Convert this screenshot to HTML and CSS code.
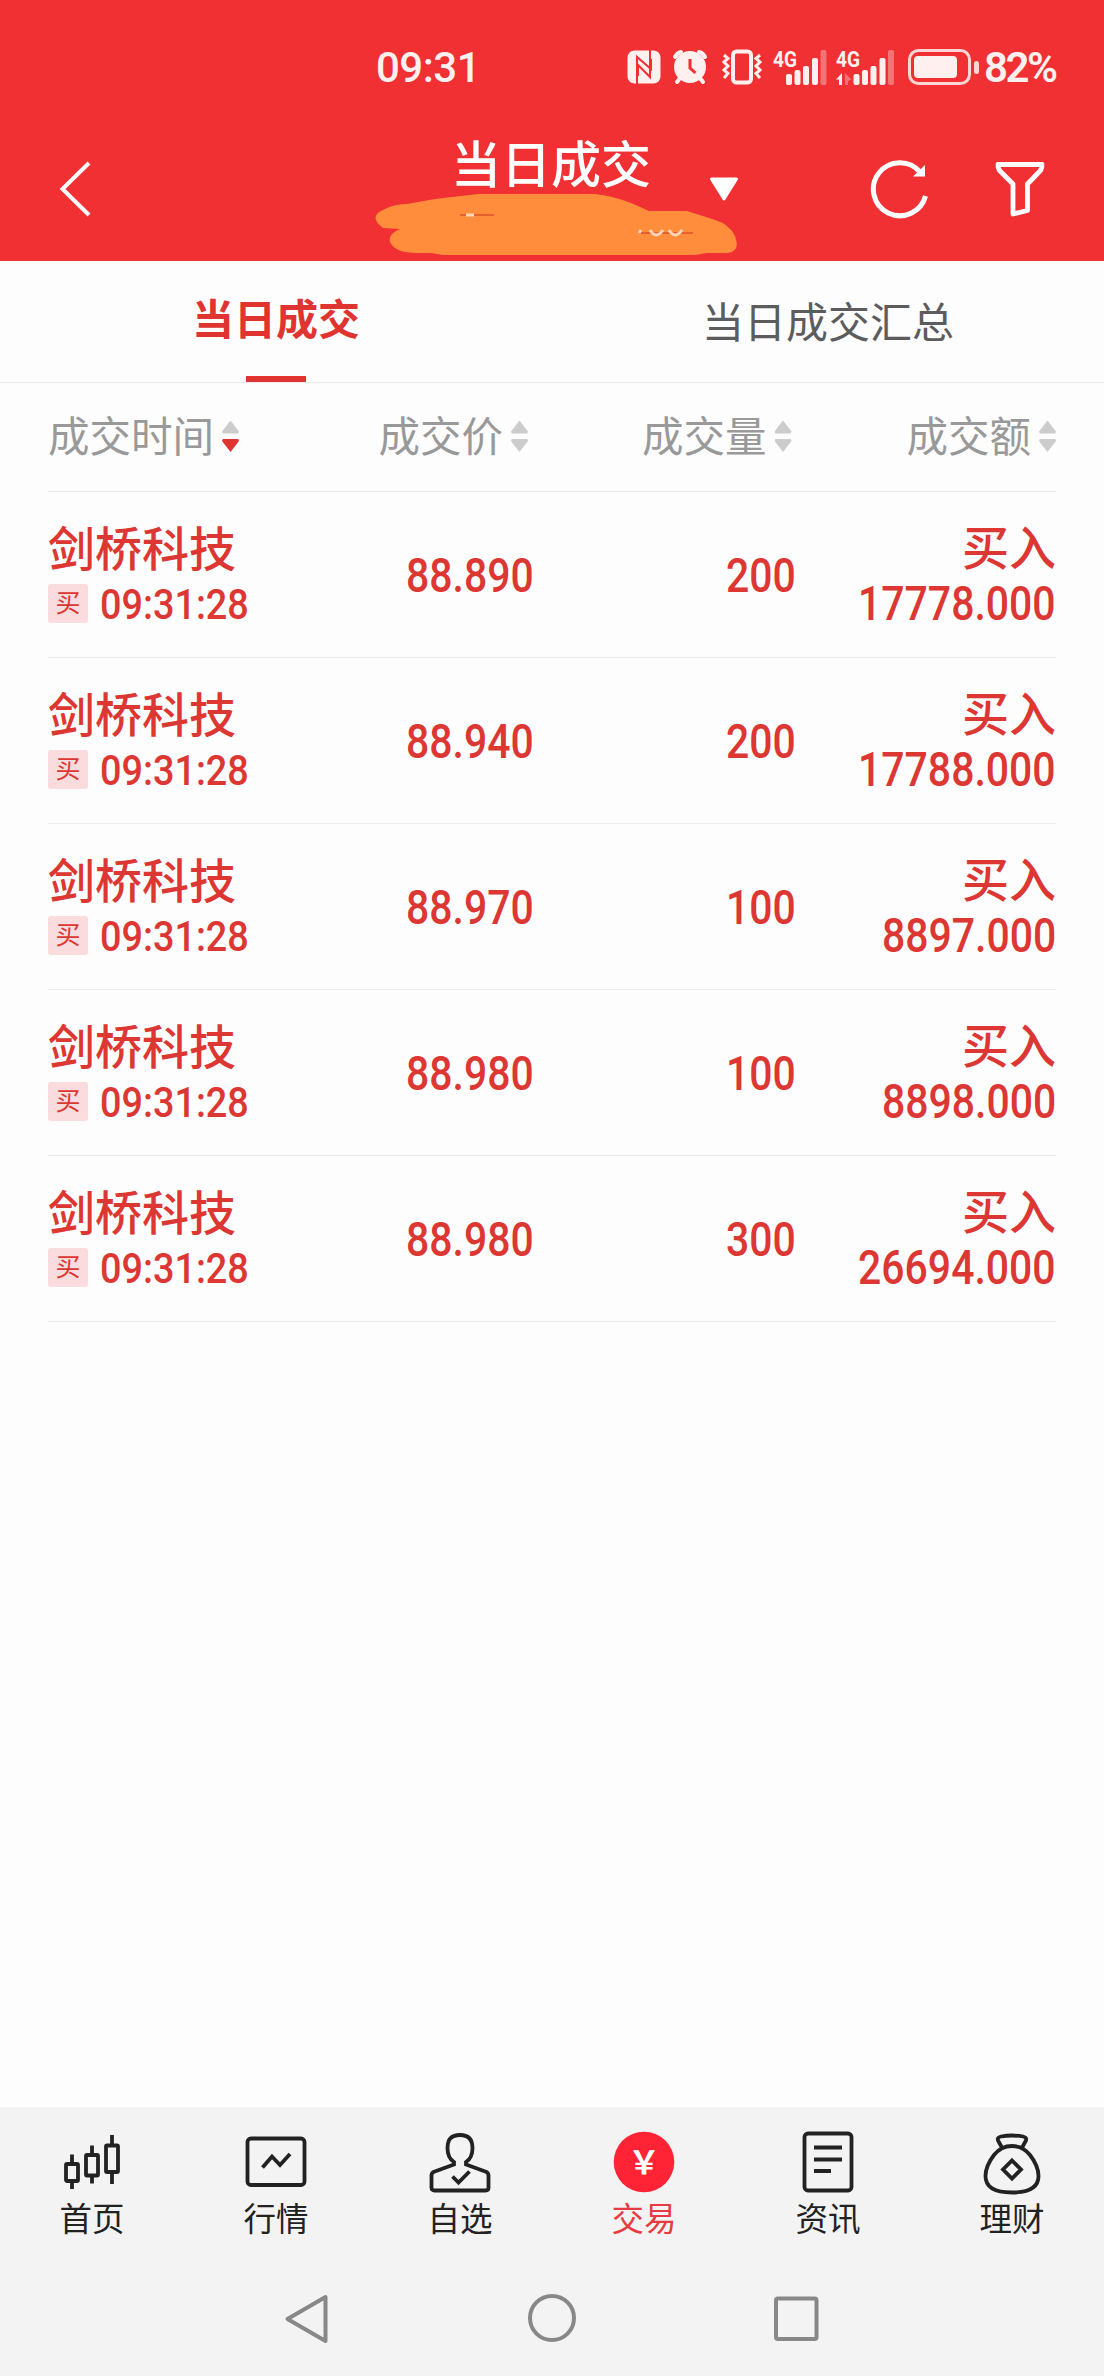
FILE: index.html
```html
<!DOCTYPE html>
<html lang="zh-CN">

<head>
    <meta charset="UTF-8">
    <meta name="viewport" content="width=device-width, initial-scale=1.0">
    <title>当日成交</title>
    <link rel="stylesheet" href="styles.css">
</head>

<body>
    <div class="main">
        <header>
            <div class="status">
                <span class="clock">09:31</span>
                <div class="status-icons">
                    <svg class="nfc" width="34" height="34" viewBox="0 0 34 34">
                        <rect x="0.5" y="0.5" width="33" height="33" rx="7" fill="#fdf0ee" />
                        <path d="M10 34V7L24 19V9M23 0V27L11 15V26" fill="none" stroke="#f03033" stroke-width="2" />
                    </svg>
                    <svg class="alarm" width="36" height="36" viewBox="0 0 36 36">
                        <path d="M3 8Q5 4 9 3M33 8Q31 4 27 3M8 29L5 33M28 29L31 33" fill="none" stroke="#fdf0ee" stroke-width="4" stroke-linecap="round" />
                        <circle cx="18" cy="18" r="16" fill="#fdf0ee" />
                        <path d="M18 10V19L23.500 24" fill="none" stroke="#f03033" stroke-width="3" />
                    </svg>
                    <svg class="vibrate" width="42" height="36" viewBox="0 0 42 36">
                        <g fill="none" stroke="#fdf0ee" stroke-width="3">
                            <rect x="12" y="2.500" width="18" height="31" rx="3.500" stroke-width="4" />
                            <path d="M3 6L7 9.500L3 13L7 17L3 21L7 24.500L3 29M39 6L35 9.500L39 13L35 17L39 21L35 24.500L39 29" />
                        </g>
                    </svg>
                    <svg class="signal" width="54" height="40" viewBox="0 -4 54 40">
                        <text x="0" y="17.500" textLength="24" lengthAdjust="spacingAndGlyphs">4G</text>
                        <g fill="#fdf0ee">
                            <rect x="13" y="25" width="6" height="11" rx="2" />
                            <rect x="21.500" y="21" width="6" height="15" rx="2" />
                            <rect x="30" y="17" width="6" height="19" rx="2" />
                            <rect x="39" y="9" width="6" height="27" rx="2" />
                            <rect x="47.500" y="1" width="6" height="35" rx="2" opacity="0.35" />
                        </g>
                    </svg>
                    <svg class="signal two" width="60" height="40" viewBox="0 -4 60 40">
                        <text x="0" y="17.500" textLength="24" lengthAdjust="spacingAndGlyphs">4G</text>
                        <g fill="#fdf0ee">
                            <path d="M0 30.500L6 24V36H3V30.500Z" />
                            <path d="M9 24L15.500 30.500L12 32V36H9Z" opacity="0.35" />
                            <rect x="17.500" y="25" width="6" height="11" rx="2" />
                            <rect x="26" y="21" width="6" height="15" rx="2" />
                            <rect x="34.500" y="17" width="6" height="19" rx="2" />
                            <rect x="43.500" y="9" width="6" height="27" rx="2" />
                            <rect x="52" y="1" width="6" height="35" rx="2" opacity="0.35" />
                        </g>
                    </svg>
                    <svg class="battery" width="72" height="36" viewBox="0 0 72 36">
                        <rect x="1.500" y="1.500" width="60" height="33" rx="9" fill="none" stroke="#fdd5d2" stroke-width="3" />
                        <rect x="6" y="7" width="43" height="22" rx="4" fill="#fdf0ee" />
                        <rect x="66" y="12" width="5" height="13" rx="2.500" fill="#fdd5d2" />
                    </svg>
                </div>
                <span class="percent">82%</span>
            </div>
            <div class="titlebar">
                <svg class="back" width="34" height="56" viewBox="0 0 34 56">
                    <path d="M31 2L4.500 28L31 54" fill="none" stroke="#fff" stroke-width="4" />
                </svg>
                <div class="title">
                    <h1>当日成交</h1>
                    <svg class="account" width="364" height="64" viewBox="0 0 364 64">
                        <path fill="#ff8d3b" d="M12 17Q22 12 34 12L62 7L105 2H222Q240 4 258 11L276 19H314Q330 24 342 28Q356 32 362 44Q368 60 354 61L334 61L322 63H70L58 61L44 61Q22 61 17 50Q15 42 27 37L10 36Q-6 24 12 17Z" />
                        <path d="M87 23H121M267 41H320" stroke="#e5622f" stroke-width="2" fill="none" />
                        <path d="M93 23H101M277 38Q283 48 290 38M296 38Q302 48 309 38M268 38L266 41" stroke="#ffd7b8" stroke-width="3" fill="none" />
                    </svg>
                </div>
                <svg class="drop" width="30" height="25" viewBox="0 0 30 25">
                    <path d="M2.500 2H27.500L15 22Z" fill="#fff" stroke="#fff" stroke-width="3" stroke-linejoin="round" />
                </svg>
                <svg class="refresh" width="60" height="60" viewBox="0 0 60 60">
                    <path d="M55.500 37A26.500 26.500 0 1 1 50 13" fill="none" stroke="#fff" stroke-width="5" />
                    <path d="M55 6V17.500H43Z" fill="#fff" />
                </svg>
                <svg class="filter" width="50" height="56" viewBox="0 0 50 56">
                    <path d="M3 3.500H47Q47 8 45 10L32.500 23V49.500L18 53V23L5 10Q3 8 3 3.500Z" fill="none" stroke="#fff" stroke-width="4.800" stroke-linejoin="round" />
                </svg>
            </div>
        </header>

        <nav class="tabs">
            <a class="active">当日成交</a>
            <a>当日成交汇总</a>
        </nav>

        <div class="list">
            <div class="row head">
                <div>成交时间<i class="sort down"></i></div>
                <div>成交价<i class="sort"></i></div>
                <div>成交量<i class="sort"></i></div>
                <div>成交额<i class="sort"></i></div>
            </div>
            <div class="row">
                <div class="stock"><b>剑桥科技</b><p><em>买</em><span class="time">09:31:28</span></p></div>
                <div class="num">88.890</div>
                <div class="num">200</div>
                <div class="amount"><b>买入</b><span class="num">17778.000</span></div>
            </div>
            <div class="row">
                <div class="stock"><b>剑桥科技</b><p><em>买</em><span class="time">09:31:28</span></p></div>
                <div class="num">88.940</div>
                <div class="num">200</div>
                <div class="amount"><b>买入</b><span class="num">17788.000</span></div>
            </div>
            <div class="row">
                <div class="stock"><b>剑桥科技</b><p><em>买</em><span class="time">09:31:28</span></p></div>
                <div class="num">88.970</div>
                <div class="num">100</div>
                <div class="amount"><b>买入</b><span class="num">8897.000</span></div>
            </div>
            <div class="row">
                <div class="stock"><b>剑桥科技</b><p><em>买</em><span class="time">09:31:28</span></p></div>
                <div class="num">88.980</div>
                <div class="num">100</div>
                <div class="amount"><b>买入</b><span class="num">8898.000</span></div>
            </div>
            <div class="row">
                <div class="stock"><b>剑桥科技</b><p><em>买</em><span class="time">09:31:28</span></p></div>
                <div class="num">88.980</div>
                <div class="num">300</div>
                <div class="amount"><b>买入</b><span class="num">26694.000</span></div>
            </div>
        </div>

        <footer>
            <nav class="menu">
                <a>
                    <svg width="64" height="66" viewBox="0 0 64 66">
                        <path d="M12 24.500V34M12 51V59M32 15.500V25M32 46V53.500M52 5V15M52 42V54" />
                        <rect x="6" y="34" width="12" height="17" rx="1" />
                        <rect x="26" y="25" width="12" height="20.500" rx="1" />
                        <rect x="46" y="15.500" width="12" height="26.500" rx="1" />
                    </svg>
                    首页
                </a>
                <a>
                    <svg width="64" height="66" viewBox="0 0 64 66">
                        <rect x="3.500" y="8.500" width="57" height="46.500" rx="3.500" />
                        <path d="M18.500 37.500L28 26.500L36 35L46 24" />
                    </svg>
                    行情
                </a>
                <a>
                    <svg width="64" height="66" viewBox="0 0 64 66">
                        <path d="M26 32Q19.500 28 19.500 18Q19.500 5 32 5Q44.500 5 44.500 18Q44.500 28 38 32V34.500L58.500 42Q60.500 43 60.500 46V57.500Q60.500 60.500 57.500 60.500H6.500Q3.500 60.500 3.500 57.500V46Q3.500 43 5.500 42L26 34.500Z" />
                        <path d="M24.500 46.500L30.500 52.500L41.500 41.500" />
                    </svg>
                    自选
                </a>
                <a class="on">
                    <svg width="64" height="66" viewBox="0 0 64 66">
                        <circle cx="32" cy="32" r="30.300" />
                        <text x="32" y="44">￥</text>
                    </svg>
                    交易
                </a>
                <a>
                    <svg width="64" height="66" viewBox="0 0 64 66">
                        <rect x="8.500" y="3.500" width="47" height="57" rx="3.500" />
                        <path d="M18 17.500H46M18 29.500H46M18 41H35" />
                    </svg>
                    资讯
                </a>
                <a>
                    <svg width="64" height="66" viewBox="0 0 64 66">
                        <path d="M22.500 18.500L18 10.500Q17 7.500 21 6.500Q32 4.500 43 6.500Q47 7.500 46 10.500L41.500 18.500" />
                        <path d="M32 16Q43 16 50 25Q58.500 36 58.500 46Q58.500 62.500 32 62.500Q5.500 62.500 5.500 46Q5.500 36 14 25Q21 16 32 16Z" />
                        <path d="M32 30.500L41 39.500L32 48.500L23 39.500Z" />
                    </svg>
                    理财
                </a>
            </nav>
            <div class="system">
                <svg width="52" height="52" viewBox="0 0 52 52">
                    <path d="M43.500 5V49L5.500 27Z" />
                </svg>
                <svg width="52" height="52" viewBox="0 0 52 52">
                    <circle cx="26" cy="26" r="22" />
                </svg>
                <svg width="52" height="52" viewBox="0 0 52 52">
                    <rect x="6" y="6.500" width="40.500" height="40.500" rx="2" />
                </svg>
            </div>
        </footer>
    </div>
</body>

</html>
```

FILE: styles.css
```css
* {
    box-sizing: border-box;
}

body {
    margin: 0;
    font-family: Roboto, "Noto Sans CJK SC", sans-serif;
    background-color: #fdfdfd;
}

svg {
    display: block;
    flex: none;
}

.main {
    display: flex;
    flex-direction: column;
    height: 2376px;
}

header {
    height: 261px;
    background-color: #f03033;
    color: #fff;
}

/* 状态栏 */
.status {
    display: flex;
    align-items: center;
    height: 134px;
    padding-left: 376px;
    color: #fdf0ee;
    font-size: 42px;
    font-weight: 500;
}

.clock {
    width: 251px;
    letter-spacing: -0.5px;
}

.status-icons {
    display: flex;
    align-items: center;
}

.alarm {
    margin-left: 11px;
}

.vibrate {
    margin-left: 13px;
}

.signal {
    margin-top: -4px;
    margin-left: 10px;
}

.signal.two {
    margin-left: 9px;
}

.signal text {
    fill: #fdf0ee;
    font-size: 22px;
    font-weight: 700;
}

.battery {
    margin-left: 12px;
}

.percent {
    margin-left: 4px;
    font-weight: 600;
    letter-spacing: -2.5px;
}

.titlebar {
    display: flex;
    align-items: center;
    height: 110px;
    padding-left: 58px;
}

.title {
    width: 364px;
    height: 110px;
    margin-left: 281px;
}

h1 {
    height: 58px;
    margin: 0;
    padding-left: 78px;
    font-size: 50px;
    font-weight: 500;
    line-height: 64px;
}

.drop {
    margin-left: -28px;
}

.refresh {
    margin-left: 131px;
}

.filter {
    margin-left: 65px;
}

.tabs {
    display: flex;
    height: 122px;
    border-bottom: 1px solid #ebebec;
    font-size: 42px;
}

.tabs a {
    position: relative;
    width: 50%;
    line-height: 125px;
    text-align: center;
    color: #5c5c5e;
}

.tabs .active {
    line-height: 119px;
    font-weight: 700;
    color: #e03431;
}

.tabs .active::after {
    content: "";
    position: absolute;
    left: 246px;
    bottom: 0;
    width: 60px;
    height: 6px;
    background-color: #e03431;
}

.list {
    flex-grow: 1;
    padding: 0 48px;
}

.row {
    display: grid;
    grid-template-columns: 221px 265px 262px 260px;
    align-items: center;
    height: 166px;
    border-bottom: 1px solid #ebebec;
    color: #dc3732;
}

.row>* {
    justify-self: end;
}

.row>:first-child {
    justify-self: start;
}

.head {
    height: 109px;
    grid-template-columns: 221px 259px 263.500px 264.500px;
    font-size: 41.500px;
    line-height: 50px;
    color: #999;
}

.head>div {
    display: flex;
    align-items: center;
    padding-top: 2px;
}

/* 排序箭头 */
.sort {
    width: 17px;
    height: 32px;
    margin: -3px 0 0 8px;
}

.sort::before,
.sort::after {
    content: "";
    display: block;
    height: 13px;
    background-color: #ccc;
    clip-path: polygon(50% 0, 100% 85%, 95% 100%, 5% 100%, 0 85%);
}

.sort::after {
    margin-top: 5px;
    transform: scaleY(-1);
}

.sort.down::after {
    background-color: #e03431;
}

.row b {
    display: block;
    font-size: 47px;
    font-weight: 500;
    line-height: 52px;
}

.row p {
    display: flex;
    align-items: center;
    margin: 8px 0 2px;
    height: 39px;
}

.row em {
    width: 40px;
    height: 39px;
    border-radius: 3px;
    background-color: #fadcde;
    font-size: 25px;
    font-style: normal;
    line-height: 39px;
    text-align: center;
}

.num,
.time {
    font-size: 48px;
    font-weight: 500;
    line-height: 50px;
    transform: scaleX(0.853);
    transform-origin: right;
}

.row>.num {
    padding-top: 3px;
}

.time {
    margin-left: 12px;
    padding-top: 2px;
    font-size: 42px;
    transform: scaleX(0.9);
    transform-origin: left;
}

.amount {
    display: flex;
    flex-direction: column;
    align-items: flex-end;
}

.amount .num {
    margin-top: 7px;
    line-height: 44px;
}

footer {
    height: 269px;
    background-color: #f3f3f3;
}

.menu {
    display: flex;
    padding-top: 23px;
}

.menu a {
    display: flex;
    flex-direction: column;
    align-items: center;
    width: 184px;
    font-size: 32.500px;
    line-height: 48px;
    color: #222;
}

.menu svg {
    fill: none;
    stroke: #222;
    stroke-width: 3.800;
}

.menu .on {
    color: #e83a40;
}

.on circle {
    fill: #ff2435;
    stroke: none;
}

.on text {
    fill: #fff;
    stroke: none;
    font-family: "Noto Sans CJK SC", sans-serif;
    font-size: 32px;
    font-weight: 700;
    text-anchor: middle;
}

.system {
    display: flex;
    justify-content: center;
    gap: 192px;
    padding-top: 48px;
}

.system svg {
    fill: none;
    stroke: #888;
    stroke-width: 4;
    stroke-linejoin: round;
}
```
